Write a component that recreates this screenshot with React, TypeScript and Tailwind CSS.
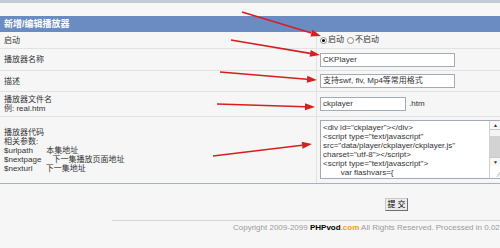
import React from "react";

const font = "font-['Liberation_Sans','Noto_Sans_CJK_SC',sans-serif]";

function Arrow({ x1, y1, x2, y2 }: { x1: number; y1: number; x2: number; y2: number }) {
  const a = Math.atan2(y2 - y1, x2 - x1);
  const len = 10;
  const w = 3.5;
  const bx = x2 - len * Math.cos(a);
  const by = y2 - len * Math.sin(a);
  const px = -Math.sin(a) * w;
  const py = Math.cos(a) * w;
  return (
    <g>
      <line x1={x1} y1={y1} x2={bx} y2={by} stroke="#d61f1f" strokeWidth={1.6} />
      <polygon points={`${x2},${y2} ${bx + px},${by + py} ${bx - px},${by - py}`} fill="#d61f1f" />
    </g>
  );
}

function Radio({ checked }: { checked?: boolean }) {
  return (
    <span className="mr-[1px] inline-flex h-[7px] w-[7px] items-center justify-center rounded-full border border-[#8a8a8a] bg-white">
      {checked && <span className="h-[3px] w-[3px] rounded-full bg-black" />}
    </span>
  );
}

function Row({ h, label, children, last }: { h: string; label: React.ReactNode; children: React.ReactNode; last?: boolean }) {
  return (
    <div className={`grid grid-cols-[317px_1fr] ${h} border-b ${last ? "border-[#9db2cc]" : "border-[#e2e2e2]"}`}>
      <div className="flex items-center border-r border-[#e2e2e2] px-1 leading-[9px]">{label}</div>
      <div className="flex items-center pl-[3px]">{children}</div>
    </div>
  );
}

const code = `<div id="ckplayer"></div>
<script type="text/javascript"
src="data/player/ckplayer/ckplayer.js"
charset="utf-8"></script>
<script type="text/javascript">
        var flashvars={`;

export default function App() {
  return (
    <div className={`relative h-[248px] w-[500px] overflow-hidden bg-[#f6f6f6] text-[8px] text-[#333] ${font}`}>
      <div className="h-4 border-t-[3px] border-[#c3cbd5] bg-[#f7f7f7]" />
      <div className="h-4 bg-[#6b8cc2] px-1 text-[9px] font-bold leading-4 text-white">新增/编辑播放器</div>

      <Row h="h-[17px]" label="启动">
        <div className="flex items-center">
          <Radio checked />
          <span>启动</span>
          <span className="ml-[3px]" />
          <Radio />
          <span>不启动</span>
        </div>
      </Row>
      <Row h="h-[22px]" label="播放器名称">
        <div className="flex h-[14px] w-[135px] items-center border border-[#a4abb4] bg-white pl-[2px]">CKPlayer</div>
      </Row>
      <Row h="h-[21px]" label="描述">
        <div className="flex h-[14px] w-[135px] items-center border border-[#a4abb4] bg-white pl-[2px]">
          支持swf, flv, Mp4等常用格式
        </div>
      </Row>
      <Row
        h="h-[25px]"
        label={
          <div>
            <div>播放器文件名</div>
            <div>例: real.htm</div>
          </div>
        }
      >
        <div className="flex h-[14px] w-[86px] items-center border border-[#a4abb4] bg-white pl-[2px]">ckplayer</div>
        <span className="ml-[3px]">.htm</span>
      </Row>
      <Row
        h="h-[67px]"
        last
        label={
          <div className="whitespace-pre">
            <div>播放器代码</div>
            <div>相关参数:</div>
            <div>$urlpath      本集地址</div>
            <div>$nextpage     下一集播放页面地址</div>
            <div>$nexturl      下一集地址</div>
          </div>
        }
      >
        <div className="flex h-[59px] w-[182px] self-start mt-[3px] border border-[#a4abb4] bg-white">
          <div className="flex-1 overflow-hidden whitespace-pre pl-[2px] pt-[2px] leading-[9px]">{code}</div>
          <div className="flex w-[12px] flex-col border-l border-[#d0d0d0] bg-[#eeeeee]">
            <div className="flex h-[9px] items-center justify-center border-b border-[#c8c8c8] bg-[#f8f8f8] text-[5px] leading-none">▲</div>
            <div className="h-[6px] bg-[#f4f4f4]" />
            <div className="flex-1 bg-[#d3d3d3]" />
            <div className="flex h-[9px] items-center justify-center border-t border-[#c8c8c8] bg-[#f8f8f8] text-[5px] leading-none">▼</div>
            <div className="flex h-[12px] items-end justify-end bg-white pr-[1px] text-[7px] leading-none text-[#aaa]">⁄⁄</div>
          </div>
        </div>
      </Row>

      <div className="ml-[385px] mt-[14px] flex h-[13px] w-[23px] items-center justify-center border border-[#c8c8c8] border-b-[#6e6e6e] border-r-[#6e6e6e] bg-[#ececec] text-[8px] leading-none text-black">
        提 交
      </div>
      <div className="ml-[112px] mt-[9px] border-t border-[#d6d6d6] pl-[121px] pt-[2px] leading-[10px] whitespace-nowrap text-[#9a9a9a]">
        Copyright 2009-2099 <span className="font-bold text-black">PHPvod</span>
        <span className="font-bold text-[#f39a1e]">.com</span> All Rights Reserved. Processed in 0.02
      </div>

      <svg className="pointer-events-none absolute left-0 top-0" width={500} height={248}>
        <Arrow x1={242} y1={12} x2={321} y2={36} />
        <Arrow x1={231} y1={40} x2={320} y2={55} />
        <Arrow x1={220} y1={72} x2={317} y2={80} />
        <Arrow x1={217} y1={104} x2={315} y2={107} />
        <Arrow x1={213} y1={156} x2={312} y2={144} />
      </svg>
    </div>
  );
}
